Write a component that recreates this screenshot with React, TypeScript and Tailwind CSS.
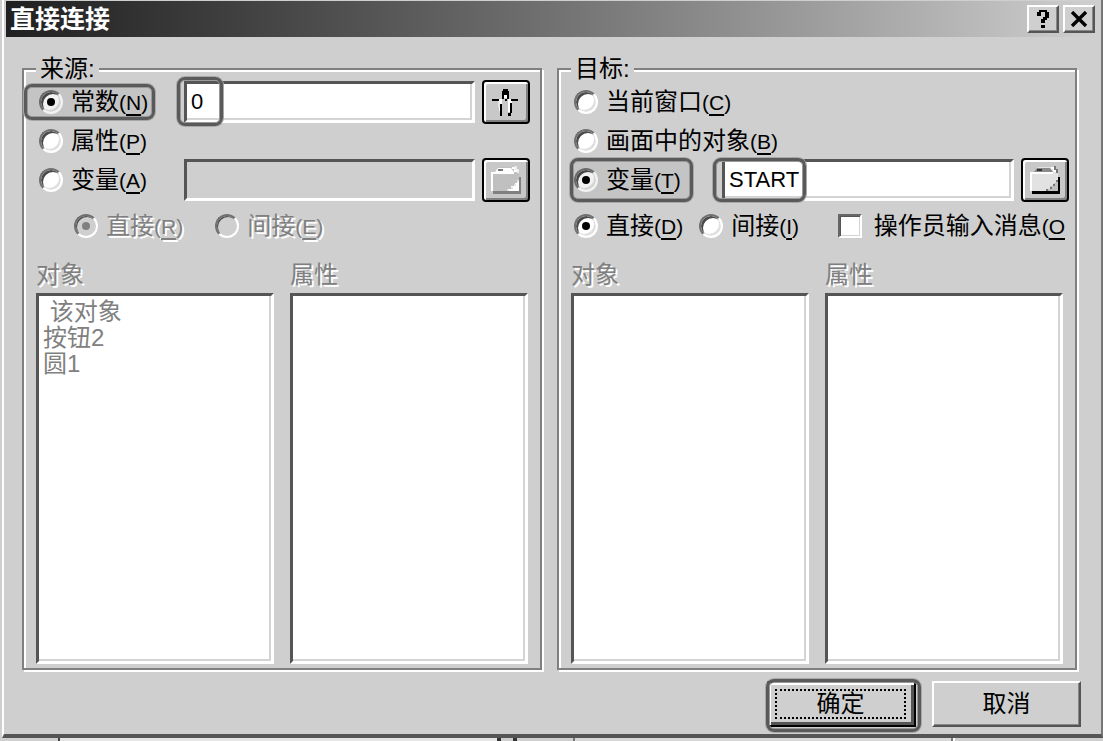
import type { ReactNode } from "react";

const SUNKEN =
  "border-[3px] border-t-[#555] border-l-[#555] border-r-white border-b-white shadow-[inset_-2px_-2px_0_#d4d4d4]";

function Mark({ className }: { className: string }) {
  return (
    <span
      aria-hidden="true"
      className={`pointer-events-none absolute rounded-lg border-[3px] border-[#5a5a5a] shadow-[0_0_0_1px_#a8a8a8,inset_0_0_0_1px_#999] ${className}`}
    />
  );
}

type RadioProps = {
  id: string;
  name: string;
  text: string;
  accel: string;
  checked?: boolean;
  disabled?: boolean;
};

function Radio({ id, name, text, accel, checked, disabled }: RadioProps) {
  return (
    <span className="flex shrink-0 items-center gap-2">
      <input
        type="radio"
        id={id}
        name={name}
        defaultChecked={checked}
        disabled={disabled}
        className="grid size-6 shrink-0 appearance-none place-items-center rounded-full border-2 border-t-[#707070] border-r-white border-b-white border-l-[#707070] bg-white shadow-[inset_2px_2px_0_#4a4a4a,inset_-2px_-2px_0_#e0e0e0] before:size-2 before:rounded-full checked:before:bg-black disabled:bg-[#cfcfcf] disabled:shadow-[inset_1px_1px_0_#4a4a4a] disabled:checked:before:bg-[#808080]"
      />
      <label
        htmlFor={id}
        className={`whitespace-nowrap ${disabled ? "text-[#808080] [text-shadow:2px_2px_0_#fff]" : "text-black"}`}
      >
        {text}
        <span className="text-[21px]">
          (<u className="underline-offset-4">{accel}</u>)
        </span>
      </label>
    </span>
  );
}

function Group({ title, children }: { title: string; children: ReactNode }) {
  return (
    <fieldset className="flex min-w-0 flex-1 flex-col border-2 border-[#808080] pr-2 pb-1 pl-3 shadow-[2px_2px_0_#fff,inset_2px_2px_0_#fff]">
      <legend className="bg-[#cfcfcf] px-1 leading-6">{title}</legend>
      {children}
    </fieldset>
  );
}

function ListBox({ id, label, items }: { id: string; label: string; items: string[] }) {
  return (
    <div className="flex flex-1 flex-col">
      <label htmlFor={id} className="h-[42px] pt-1 leading-10 text-[#808080] [text-shadow:2px_2px_0_#fff]">
        {label}
      </label>
      <select
        id={id}
        size={8}
        disabled
        className={`min-h-0 w-full flex-1 appearance-none overflow-hidden rounded-none bg-white p-0 pl-1 disabled:opacity-100 ${SUNKEN}`}
      >
        {items.map((item) => (
          <option key={item} className="flex h-[26px] min-h-0 items-center p-0 text-2xl text-[#808080]">
            {item}
          </option>
        ))}
      </select>
    </div>
  );
}

function Lists({ side, items }: { side: string; items: string[] }) {
  return (
    <div className="flex flex-1 gap-4 pr-1">
      <ListBox id={`${side}-objects`} label="对象" items={items} />
      <ListBox id={`${side}-props`} label="属性" items={[]} />
    </div>
  );
}

function ToolButton({ label, disabled, children }: { label: string; disabled?: boolean; children: ReactNode }) {
  return (
    <button
      type="button"
      aria-label={label}
      disabled={disabled}
      className="flex h-11 w-12 shrink-0 items-center justify-center rounded-sm border-2 border-black bg-[#c8c8c8] shadow-[inset_2px_2px_0_#fff,inset_-2px_-2px_0_#808080]"
    >
      {children}
    </button>
  );
}

function FolderIcon({ muted }: { muted?: boolean }) {
  return (
    <svg width="36" height="32" viewBox="0 0 36 32">
      <path d="M5 16h26v-3h2v17H5z" fill={muted ? "#808080" : "#000"} />
      <path d="M3 9h4l4-6h15l5 7v7l-1 10H3z" fill={muted ? "#c0c0c0" : "#e2e2e2"} />
      <path d="M7 8l3-4h13l3 4z" fill={muted ? "#fff" : "#8a8a8a"} />
      <path d="M10 5h5v2h-5z" fill={muted ? "#777" : "#333"} />
      <path d="M4 27V9h22" fill="none" stroke="#fff" strokeWidth="2" />
      <path d="M24 3h3v2h2v3h-3V5h-2z" fill="#fff" />
      <path d="M27 2h2v3h2v4h-2V6h-2z" fill={muted ? "#eee" : "#777"} />
      <path d="M31 17v10H19v-2h4v-3h4v-3h2v-2z" fill={muted ? "#fff" : "#c0c0c0"} />
      <path d="M19 25h2v2h-2zM23 23h2v2h-2zM26 20h2v2h-2zM29 16h2v2h-2z" fill={muted ? "#e4e4e4" : "#777"} />
    </svg>
  );
}

function PliersIcon() {
  return (
    <svg width="32" height="32" viewBox="0 0 32 32" shapeRendering="crispEdges">
      <path d="M9 13h3v12H9zM18 13h4v9h-2v4h-2z" fill="#fff" />
      <path d="M13 3h5v2h1v8h-2V9h-3v4h-2V5h1z" fill="#000" />
      <path d="M14 4h3v5h-3z" fill="#000" />
      <path d="M14 9h3v3h-3z" fill="#fff" />
      <path d="M2 13h7v2H2zM21 13h7v2h-7zM15 13h2v2h-2z" fill="#000" />
      <path d="M10 18h2v12h-2zM20 17h2v10h-2zM18 27h3v3h-3z" fill="#000" />
      <path d="M8 15h2v6H8z" fill="#e8e8e8" />
    </svg>
  );
}

const CAPTION_BUTTON =
  "flex h-7 w-8 items-center justify-center border-2 border-t-white border-r-[#555] border-b-[#555] border-l-white bg-[#cfcfcf] shadow-[inset_-1px_-1px_0_#888]";

export default function App() {
  return (
    <div className="flex min-h-screen flex-col bg-[#cfcfcf] font-['Liberation_Sans','Noto_Sans_CJK_SC',sans-serif] text-2xl text-black">
      <main className="ml-0.5 flex flex-1 flex-col border-r-2 border-b-4 border-l-2 border-r-[#777] border-b-[#555] border-l-white">
        <header className="mr-1 ml-0.5 flex h-[37px] items-center gap-1 border-t border-[#cfcfcf] bg-linear-to-r from-[#202020] to-[#cfcfcf] pr-0.5 pl-1">
          <h1 className="flex-1 text-[25px] leading-8 font-bold text-white">直接连接</h1>
          <button type="button" aria-label="帮助" className={CAPTION_BUTTON}>
            <svg width="14" height="20" viewBox="0 0 14 20" shapeRendering="crispEdges">
              <path d="M3 1h8v2h2v6h-2v2H9v3H5v-4h2V8h2V3H5v4H1V3h2zM5 16h4v3H5z" fill="#000" />
            </svg>
          </button>
          <button type="button" aria-label="关闭" className={CAPTION_BUTTON}>
            <svg width="18" height="16" viewBox="0 0 18 16">
              <path d="M2 1l14 14M16 1L2 15" stroke="#000" strokeWidth="3.4" />
            </svg>
          </button>
        </header>

        <div className="mt-5 mr-6 ml-[18px] flex flex-1 gap-[15px]">
          <Group title="来源:">
            <div className="relative flex h-[42px] items-center pr-0.5">
              <div className="w-[148px] shrink-0 pl-[3px]">
                <Radio id="src-const" name="source" text="常数" accel="N" checked />
              </div>
              <input
                aria-label="常数值"
                defaultValue="0"
                className={`h-[42px] min-w-0 flex-1 rounded-none bg-white px-1 text-[22px] outline-none ${SUNKEN}`}
              />
              <span className="ml-[7px] flex">
                <ToolButton label="选择常数">
                  <PliersIcon />
                </ToolButton>
              </span>
              <Mark className="top-[3px] -left-3 h-9 w-[131px] bg-black/5" />
              <Mark className="-top-1 left-[141px] h-[49px] w-[46px]" />
            </div>
            <div className="flex h-9 items-center pl-[3px]">
              <Radio id="src-prop" name="source" text="属性" accel="P" />
            </div>
            <div className="flex h-[42px] items-center pr-0.5">
              <div className="w-[148px] shrink-0 pl-[3px]">
                <Radio id="src-var" name="source" text="变量" accel="A" />
              </div>
              <input
                aria-label="变量名"
                disabled
                className="h-[42px] min-w-0 flex-1 rounded-none border-[3px] border-t-[#555] border-r-white border-b-white border-l-[#555] bg-[#cfcfcf]"
              />
              <span className="ml-[7px] flex">
                <ToolButton label="选择变量" disabled>
                  <FolderIcon muted />
                </ToolButton>
              </span>
            </div>
            <div className="flex h-[50px] items-center gap-8 pl-[38px]">
              <Radio id="src-direct" name="source-mode" text="直接" accel="R" checked disabled />
              <Radio id="src-indirect" name="source-mode" text="间接" accel="E" disabled />
            </div>
            <Lists side="src" items={["\u00a0该对象", "按钮2", "圆1"]} />
          </Group>

          <Group title="目标:">
            <div className="flex h-[42px] items-center pl-[3px]">
              <Radio id="dst-window" name="target" text="当前窗口" accel="C" />
            </div>
            <div className="flex h-9 items-center pl-[3px]">
              <Radio id="dst-object" name="target" text="画面中的对象" accel="B" />
            </div>
            <div className="relative -mr-0.5 flex h-[42px] items-center">
              <div className="w-[151px] shrink-0 pl-[3px]">
                <Radio id="dst-var" name="target" text="变量" accel="T" checked />
              </div>
              <input
                aria-label="目标变量"
                defaultValue="START"
                className={`h-[42px] min-w-0 flex-1 rounded-none bg-white px-1 text-[22px] outline-none ${SUNKEN}`}
              />
              <span className="ml-[7px] flex">
                <ToolButton label="选择目标变量">
                  <FolderIcon />
                </ToolButton>
              </span>
              <Mark className="-top-px -left-px h-11 w-[123px] bg-black/5" />
              <Mark className="-top-px left-[142px] h-11 w-[93px]" />
            </div>
            <div className="flex h-[50px] items-center gap-4 pl-[3px]">
              <Radio id="dst-direct" name="target-mode" text="直接" accel="D" checked />
              <Radio id="dst-indirect" name="target-mode" text="间接" accel="I" />
              <span className="ml-auto flex shrink-0 items-center gap-3 pr-0.5">
                <input
                  type="checkbox"
                  id="dst-message"
                  className="size-6 shrink-0 appearance-none border-2 border-t-[#666] border-r-white border-b-white border-l-[#666] bg-white shadow-[inset_1px_1px_0_#555,inset_-1px_-1px_0_#d4d4d4]"
                />
                <label htmlFor="dst-message" className="whitespace-nowrap">
                  操作员输入消息
                  <span className="text-[21px]">
                    (<u className="underline-offset-4">O</u>
                  </span>
                </label>
              </span>
            </div>
            <Lists side="dst" items={[]} />
          </Group>
        </div>

        <footer className="flex justify-end gap-4 pt-[11px] pr-5 pb-[7px]">
          <span className="relative flex">
            <button
              type="button"
              className="h-[46px] w-[149px] border-2 border-black bg-[#cfcfcf] py-1.5 pr-2 pl-1.5 shadow-[inset_2px_2px_0_#fff,inset_-3px_-3px_0_#555]"
            >
              <span className="flex h-full items-center justify-center border-2 border-dotted border-black">确定</span>
            </button>
            <Mark className="-top-0.5 -left-px h-[53px] w-[155px]" />
          </span>
          <button
            type="button"
            className="h-[46px] w-[149px] border-2 border-t-white border-r-[#555] border-b-[#555] border-l-white bg-[#cfcfcf] shadow-[inset_-1px_-1px_0_#888]"
          >
            取消
          </button>
        </footer>
      </main>
      <div aria-hidden="true" className="flex h-[3px]">
        <span className="w-[60px] border-r-2 border-[#444]" />
        <span className="flex-1 bg-[#e4e4e4]" />
        <span className="w-5 border-x-4 border-[#333]" />
        <span className="w-14" />
        <span className="w-[380px] border-x-2 border-[#777] bg-[#d8d8d8]" />
        <span className="w-[150px] border-l-2 border-white" />
      </div>
    </div>
  );
}
